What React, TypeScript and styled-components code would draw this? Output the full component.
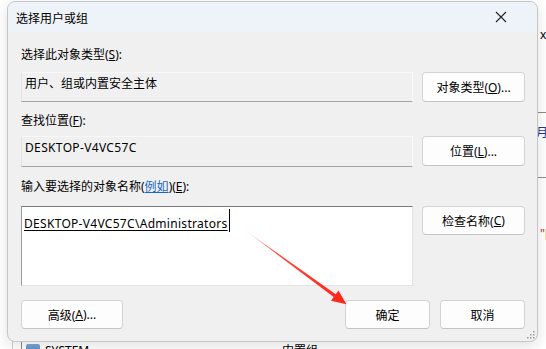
import React from 'react'
import styled, { createGlobalStyle } from 'styled-components'

const GlobalStyle = createGlobalStyle`
  html, body {
    margin: 0;
    padding: 0;
    background: #fff;
  }
  body {
    font-family: "Noto Sans", "Noto Sans CJK SC", sans-serif;
    font-size: 12px;
    color: #000;
  }
`

const Stage = styled.div`
  position: relative;
  width: 546px;
  height: 349px;
  overflow: hidden;
  background: #fff;
`

// bits of the window behind the dialog
const BackText = styled.span<{ $x: number; $y: number; $color?: string }>`
  position: absolute;
  left: ${p => p.$x}px;
  top: ${p => p.$y}px;
  font-size: 12px;
  line-height: 16px;
  color: ${p => p.$color || '#000'};
  white-space: nowrap;
`

const BackRuleH = styled.div<{ $y: number }>`
  position: absolute;
  left: 530px;
  right: 0;
  top: ${p => p.$y}px;
  height: 1px;
  background: #8d8d8d;
`

const BackRuleV = styled.div<{ $x: number; $color: string }>`
  position: absolute;
  top: 330px;
  bottom: 0;
  left: ${p => p.$x}px;
  width: 1px;
  background: ${p => p.$color};
`

const BackIcon = styled.div`
  position: absolute;
  left: 26px;
  top: 344px;
  width: 14px;
  height: 10px;
  border-radius: 2px;
  background: linear-gradient(180deg, #7fa7d6, #4d7fbf);
`

const Dialog = styled.div`
  position: absolute;
  left: 7px;
  top: 1px;
  width: 531px;
  height: 341px;
  box-sizing: border-box;
  display: flex;
  flex-direction: column;
  background: #f0f0f0;
  border: 1px solid #c6c6c6;
  border-radius: 8px;
  overflow: hidden;
  box-shadow: 0 4px 14px rgba(0, 0, 0, 0.12);
`

const TitleBar = styled.div`
  height: 30px;
  flex: none;
  display: flex;
  align-items: center;
  justify-content: space-between;
  padding-left: 8px;
  background: #eef2f9;
  font-family: "Noto Sans CJK SC", sans-serif;
  font-size: 12px;
`

const CloseButton = styled.div`
  width: 14px;
  height: 14px;
  margin-right: 29px;
  display: flex;
  align-items: center;
  justify-content: center;
`

const Body = styled.div`
  padding: 0 12px 0 13px;
  display: flex;
  flex-direction: column;
`

const Label = styled.div<{ $top: number }>`
  margin-top: ${p => p.$top}px;
  height: 16px;
  line-height: 16px;
  font-size: 12px;
  white-space: nowrap;
`

const Row = styled.div<{ $top: number }>`
  margin-top: ${p => p.$top}px;
  display: grid;
  grid-template-columns: 392px 103px;
  column-gap: 9px;
  align-items: start;
`

const ReadField = styled.div<{ $h: number }>`
  height: ${p => p.$h}px;
  box-sizing: border-box;
  padding: 3px 3px 0;
  line-height: 16px;
  background: #f0f0f0;
  border: 1px solid #e4e4e4;
  border-top-color: #f7f7f7;
  border-right-color: #fafafa;
  border-bottom-color: #a3a3a3;
  white-space: nowrap;
`

const Latin = styled.span`
  letter-spacing: 0.35px;
`

const NameBox = styled.div`
  height: 80px;
  box-sizing: border-box;
  padding: 2px 2px 0;
  background: #fff;
  border: 1px solid #e3e3e3;
  border-top-color: #7a7a7a;
  border-left-color: #9a9a9a;
`

const NameLine = styled.div`
  height: 23px;
  display: flex;
  align-items: flex-end;
`

const NameText = styled.span`
  line-height: 16px;
  letter-spacing: 0.3px;
  text-decoration: underline;
  text-underline-offset: 2px;
  white-space: nowrap;
`

const Caret = styled.span`
  width: 1px;
  height: 23px;
  background: #000;
  margin-left: 1px;
`

const Button = styled.div<{ $w?: number; $h?: number }>`
  width: ${p => (p.$w ? `${p.$w}px` : 'auto')};
  height: ${p => p.$h || 29}px;
  box-sizing: border-box;
  display: flex;
  align-items: center;
  justify-content: center;
  background: #fdfdfd;
  border: 1px solid #d3d3d3;
  border-bottom-color: #c4c4c4;
  border-radius: 4px;
  font-size: 12px;
  white-space: nowrap;
`

const Footer = styled.div`
  margin-top: 14px;
  display: flex;
  gap: 10px;
`

const Spacer = styled.div`
  flex: 1;
`

const Link = styled.u`
  color: #1a66c9;
`

const Grip = styled.svg`
  position: absolute;
  right: 2px;
  bottom: 2px;
`

const Overlay = styled.svg`
  position: absolute;
  left: 0;
  top: 0;
  pointer-events: none;
`

export default function App() {
  return (
    <>
      <GlobalStyle />
      <Stage>
        <BackText $x={540} $y={27}>x6</BackText>
        <BackRuleH $y={112} />
        <BackText $x={536} $y={125} $color="#1b3a8a">月)</BackText>
        <BackRuleH $y={177} />
        <BackText $x={540} $y={226} $color="#a3411a">"[</BackText>
        <BackRuleV $x={12} $color="#cfcfcf" />
        <BackRuleV $x={21} $color="#8a8a8a" />
        <BackIcon />
        <BackText $x={45} $y={343}>SYSTEM</BackText>
        <BackText $x={282} $y={343}>内置组</BackText>

        <Dialog>
          <TitleBar>
            <span>选择用户或组</span>
            <CloseButton>
              <svg width="12" height="12" viewBox="0 0 12 12">
                <path d="M1 1 L11 11 M11 1 L1 11" stroke="#222" strokeWidth="1.1" />
              </svg>
            </CloseButton>
          </TitleBar>
          <Body>
            <Label $top={15}>选择此对象类型(<u>S</u>):</Label>
            <Row $top={9}>
              <ReadField $h={30}>用户、组或内置安全主体</ReadField>
              <Button $h={30}>对象类型(<u>O</u>)...</Button>
            </Row>

            <Label $top={11}>查找位置(<u>F</u>):</Label>
            <Row $top={7}>
              <ReadField $h={31}><Latin>DESKTOP-V4VC57C</Latin></ReadField>
              <Button $h={30}>位置(<u>L</u>)...</Button>
            </Row>

            <Label $top={12}>
              输入要选择的对象名称(<Link>例如</Link>)(<u>E</u>):
            </Label>
            <Row $top={11}>
              <NameBox>
                <NameLine>
                  <NameText>DESKTOP-V4VC57C\Administrators</NameText>
                  <Caret />
                </NameLine>
              </NameBox>
              <Button>检查名称(<u>C</u>)</Button>
            </Row>

            <Footer>
              <Button $w={102}>高级(<u>A</u>)...</Button>
              <Spacer />
              <Button $w={85}>确定</Button>
              <Button $w={85}>取消</Button>
            </Footer>
          </Body>
          <Grip width="9" height="9" viewBox="0 0 9 9">
            <g fill="#9a9a9a">
              <rect x="7" y="1" width="1.5" height="1.5" />
              <rect x="4" y="4" width="1.5" height="1.5" />
              <rect x="7" y="4" width="1.5" height="1.5" />
              <rect x="1" y="7" width="1.5" height="1.5" />
              <rect x="4" y="7" width="1.5" height="1.5" />
              <rect x="7" y="7" width="1.5" height="1.5" />
            </g>
          </Grip>
        </Dialog>

        <Overlay width="546" height="349" viewBox="0 0 546 349">
          <defs>
            <linearGradient id="arrowFade" x1="242" y1="228" x2="346" y2="304" gradientUnits="userSpaceOnUse">
              <stop offset="0" stopColor="#ff3b2f" stopOpacity="0.05" />
              <stop offset="0.35" stopColor="#ff3226" stopOpacity="0.9" />
              <stop offset="1" stopColor="#ff2417" />
            </linearGradient>
          </defs>
          <polygon
            points="242,228 335.7,294.3 338.4,290.6 346.5,304.3 331,300.8 333.7,297.1"
            fill="url(#arrowFade)"
          />
        </Overlay>
      </Stage>
    </>
  )
}
